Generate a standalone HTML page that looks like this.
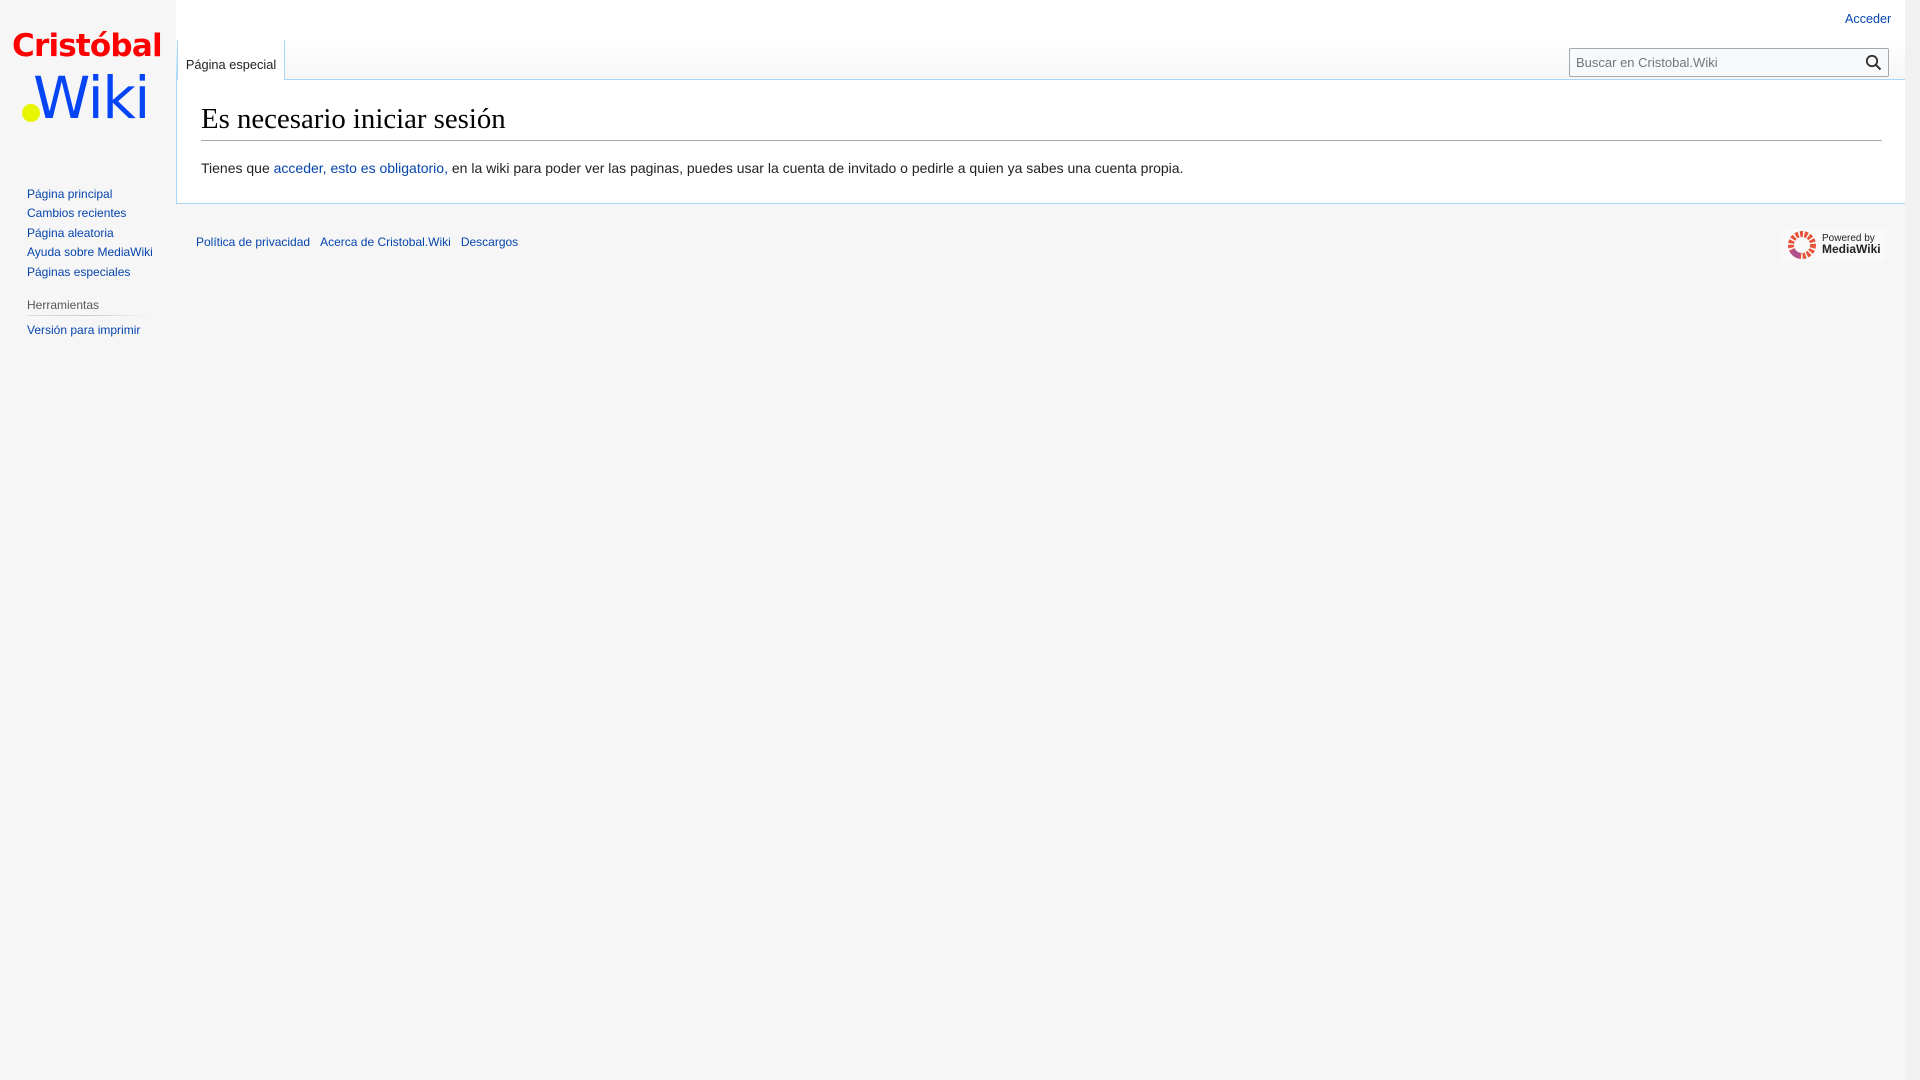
<!DOCTYPE html>
<html><head><meta charset="utf-8"><style>
*{box-sizing:border-box}
body{margin:0;width:1920px;height:1080px;background:#f6f6f6;font-family:"Liberation Sans",sans-serif;overflow:hidden;position:relative}
a{color:#0645ad;text-decoration:none}
.abs{position:absolute}
#scroll{position:absolute;right:0;top:0;width:15px;height:1080px;background:#f1f1f1}
#headbase{position:absolute;left:176px;top:0;width:1729px;height:80px;background:#fff}
#headgrad{position:absolute;left:176px;top:40px;width:1729px;height:40px;background:linear-gradient(#fff,#f6f6f6);border-bottom:1px solid #a7d7f9}
#tab{position:absolute;left:177px;top:40px;height:41px;width:108px;background:#fff;border-right:1px solid #a7d7f9;border-left:1px solid #a7d7f9;font-size:12.8px;color:#222;padding-top:17px;text-align:center}
#tabL{position:absolute;left:176px;top:40px;width:1px;height:40px;background:linear-gradient(#fff,#a7d7f9)}
#content{position:absolute;left:176px;top:80px;width:1729px;height:124px;background:#fff;border:1px solid #a7d7f9;border-right:0;border-top:0}
h1{position:absolute;left:24px;top:21px;margin:0;font-family:"Liberation Serif",serif;font-weight:normal;font-size:28.8px;color:#000;width:1681px;border-bottom:1px solid #a2a9b1;line-height:1.3;padding-bottom:2px}
#p{position:absolute;left:24px;top:80px;font-size:14px;color:#222}
#search{position:absolute;left:1569px;top:48px;width:320px;height:29px;border:1px solid #a2a9b1;border-radius:2px;background:#f8f9fa;font-size:13px;color:#72777d;padding:6px 6px}
.side a{position:absolute;left:27px;font-size:12px}
</style></head><body>
<div id="headbase"></div><div id="headgrad"></div><div id="tabL"></div>
<div id="tab">Página especial</div>
<a class="abs" style="left:1845px;top:12px;font-size:12.6px">Acceder</a>
<div id="search">Buscar en Cristobal.Wiki
<svg class="abs" style="right:6px;top:5px" width="17" height="17" viewBox="0 0 17 17"><circle cx="7" cy="7" r="5.2" fill="none" stroke="#333" stroke-width="1.8"/><path d="M11 11l4.5 4.5" stroke="#333" stroke-width="2"/></svg></div>
<div id="content">
<h1>Es necesario iniciar sesión</h1>
<div id="p">Tienes que <a>acceder, esto es obligatorio,</a> en la wiki para poder ver las paginas, puedes usar la cuenta de invitado o pedirle a quien ya sabes una cuenta propia.</div>
</div>
<div class="abs" style="left:12px;top:28px;font-family:'DejaVu Sans',sans-serif;font-weight:bold;font-size:31px;color:#f00;letter-spacing:-0.8px">Cristóbal</div>
<div class="abs" style="left:33px;top:64px;font-family:'DejaVu Sans',sans-serif;font-size:58px;color:#0645f5;letter-spacing:-1.5px">Wiki</div>
<div class="abs" style="left:22px;top:104px;width:18px;height:18px;border-radius:50%;background:#e8f500"></div>
<div class="side">
<a style="top:187px">Página principal</a>
<a style="top:206px">Cambios recientes</a>
<a style="top:226px">Página aleatoria</a>
<a style="top:245px">Ayuda sobre MediaWiki</a>
<a style="top:265px">Páginas especiales</a>
<div class="abs" style="left:27px;top:298px;font-size:12px;color:#54595d">Herramientas</div>
<div class="abs" style="left:27px;top:315px;width:122px;height:1px;background:linear-gradient(90deg,#e0e0e0,#c8ccd1,#f6f6f6)"></div>
<a style="top:323px">Versión para imprimir</a>
</div>
<div class="abs" style="left:196px;top:235px;font-size:12px"><a>Política de privacidad</a>&nbsp;&nbsp;&nbsp;<a>Acerca de Cristobal.Wiki</a>&nbsp;&nbsp;&nbsp;<a>Descargos</a></div>
<div class="abs" style="left:1781px;top:229px;width:104px;height:32px;background:#f9f9f9">
<svg class="abs" style="left:7px;top:2px" width="28" height="28" viewBox="0 0 28 28"><circle cx="14" cy="14" r="11" fill="none" stroke="#e8543a" stroke-width="6" stroke-dasharray="3 1.5"/><circle cx="14" cy="14" r="11" fill="none" stroke="#b04f8e" stroke-width="6" stroke-dasharray="10 60" transform="rotate(100 14 14)"/></svg>
<div class="abs" style="left:41px;top:4px;font-size:10px;color:#222;line-height:11px">Powered by<br><b style="font-size:12px">MediaWiki</b></div>
</div>
<div id="scroll"></div>
</body></html>
